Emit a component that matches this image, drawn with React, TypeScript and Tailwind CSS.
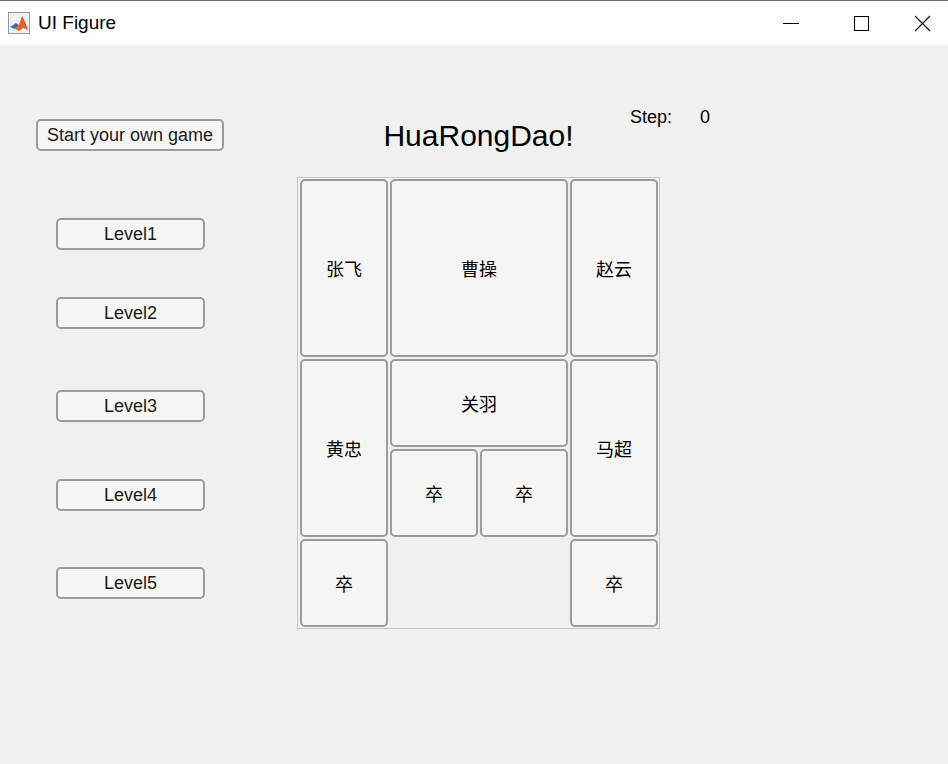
import React from "react";

type Tile = {
  name: string;
  pos: string;
};

const tiles: Tile[] = [
  { name: "张飞", pos: "col-start-1 row-start-1 row-span-2" },
  { name: "曹操", pos: "col-start-2 col-span-2 row-start-1 row-span-2" },
  { name: "赵云", pos: "col-start-4 row-start-1 row-span-2" },
  { name: "黄忠", pos: "col-start-1 row-start-3 row-span-2" },
  { name: "关羽", pos: "col-start-2 col-span-2 row-start-3" },
  { name: "马超", pos: "col-start-4 row-start-3 row-span-2" },
  { name: "卒", pos: "col-start-2 row-start-4" },
  { name: "卒", pos: "col-start-3 row-start-4" },
  { name: "卒", pos: "col-start-1 row-start-5" },
  { name: "卒", pos: "col-start-4 row-start-5" },
];

const levels = [
  { label: "Level1", mt: "mt-[67px]" },
  { label: "Level2", mt: "mt-[47px]" },
  { label: "Level3", mt: "mt-[61px]" },
  { label: "Level4", mt: "mt-[57px]" },
  { label: "Level5", mt: "mt-[56px]" },
];

function MatlabIcon() {
  return (
    <svg width="22" height="22" viewBox="0 0 22 22">
      <rect x="0.5" y="0.5" width="21" height="21" fill="#eef2f7" stroke="#8a9bb0" />
      <path d="M2 15 L8 11 L11 13 L7 17 Z" fill="#2f6fb3" />
      <path d="M7 17 L11 13 L14 4 L16 8 L20 18 L15 16 L11 19 Z" fill="#e8641c" />
      <path d="M14 4 L16 8 L20 18 L17 12 Z" fill="#b8301b" />
    </svg>
  );
}

function TitleBar() {
  return (
    <div className="flex h-[45px] items-center border-t border-[#6b6b6b] bg-white">
      <div className="ml-[8px] flex items-center">
        <MatlabIcon />
      </div>
      <span className="ml-[8px] text-[19px] text-black">UI Figure</span>
      <div className="ml-auto flex items-center">
        <div className="flex w-[70px] justify-center">
          <svg width="16" height="16" viewBox="0 0 16 16">
            <line x1="0" y1="8.5" x2="16" y2="8.5" stroke="#000" strokeWidth="1" />
          </svg>
        </div>
        <div className="flex w-[70px] justify-center">
          <svg width="16" height="16" viewBox="0 0 16 16">
            <rect x="1.5" y="1.5" width="14" height="14" fill="none" stroke="#000" strokeWidth="1" />
          </svg>
        </div>
        <div className="flex w-[52px] justify-center">
          <svg width="17" height="17" viewBox="0 0 17 17">
            <line x1="1" y1="1" x2="16" y2="16" stroke="#000" strokeWidth="1.1" />
            <line x1="16" y1="1" x2="1" y2="16" stroke="#000" strokeWidth="1.1" />
          </svg>
        </div>
      </div>
    </div>
  );
}

export default function App() {
  return (
    <div
      className="flex h-[764px] w-[948px] flex-col overflow-hidden bg-[#f0f0f0] text-black"
      style={{ fontFamily: '"Liberation Sans", Arial, "Noto Sans CJK SC", sans-serif' }}
    >
      <TitleBar />
      <div className="flex flex-1">
        <div className="flex w-[297px] flex-col pl-[36px] pt-[74px]">
          <button className="flex h-[32px] w-[188px] items-center justify-center rounded-[5px] border-2 border-[#9c9c9c] bg-[#f6f6f6] text-[18px] text-[#1a1a1a]">
            Start your own game
          </button>
          {levels.map((l) => (
            <button
              key={l.label}
              className={`${l.mt} ml-[20px] flex h-[32px] w-[149px] items-center justify-center rounded-[5px] border-2 border-[#9c9c9c] bg-[#f6f6f6] text-[18px] text-[#1a1a1a]`}
            >
              {l.label}
            </button>
          ))}
        </div>
        <div className="flex flex-col">
          <div className="flex h-[132px] items-start">
            <div className="mt-[76px] w-[363px] text-center text-[30px] leading-[30px]">HuaRongDao!</div>
            <div className="-ml-[30px] mt-[63px] flex text-[18px] leading-[18px]">
              <span className="w-[70px]">Step:</span>
              <span>0</span>
            </div>
          </div>
          <div className="w-fit border border-[#c8c8c8] pb-[1px] pl-[2px] pr-[1px] pt-[1px]">
            <div className="grid grid-cols-[repeat(4,88px)] grid-rows-[repeat(5,88px)] gap-[2px]">
              {tiles.map((t, i) => (
                <div
                  key={i}
                  className={`${t.pos} flex items-center justify-center rounded-[5px] border-2 border-[#9c9c9c] bg-[#f5f5f5] text-[18px]`}
                  style={{ fontFamily: '"Noto Sans CJK SC", sans-serif' }}
                >
                  {t.name}
                </div>
              ))}
            </div>
          </div>
        </div>
      </div>
    </div>
  );
}
